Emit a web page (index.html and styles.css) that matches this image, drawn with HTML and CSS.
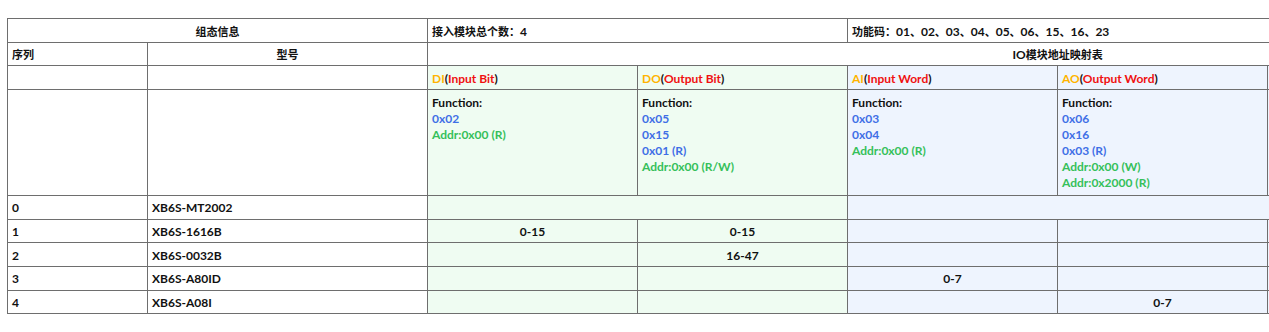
FILE: index.html
```html
<!DOCTYPE html>
<html lang="zh">
<head>
<meta charset="utf-8">
<title>IO模块地址映射表</title>
<link rel="stylesheet" href="styles.css">
</head>
<body>
<div class="wrap">
<table class="map">
  <colgroup>
    <col class="c-seq"><col class="c-model">
    <col class="c-io"><col class="c-io"><col class="c-io"><col class="c-io"><col class="c-io"><col class="c-io">
  </colgroup>
  <tbody>
    <tr class="row">
      <td colspan="2" class="center"><span class="zh">组态信息</span></td>
      <td colspan="2"><span class="zh">接入模块总个数：</span>4</td>
      <td colspan="4"><span class="zh">功能码：</span>01<span class="zh">、</span>02<span class="zh">、</span>03<span class="zh">、</span>04<span class="zh">、</span>05<span class="zh">、</span>06<span class="zh">、</span>15<span class="zh">、</span>16<span class="zh">、</span>23</td>
    </tr>
    <tr class="row">
      <td><span class="zh">序列</span></td>
      <td class="center"><span class="zh">型号</span></td>
      <td colspan="6" class="center">IO<span class="zh">模块地址映射表</span></td>
    </tr>
    <tr class="row">
      <td></td>
      <td></td>
      <td class="g"><span class="o">DI</span>(<span class="r">Input Bit</span>)</td>
      <td class="g"><span class="o">DO</span>(<span class="r">Output Bit</span>)</td>
      <td class="b"><span class="o">AI</span>(<span class="r">Input Word</span>)</td>
      <td class="b"><span class="o">AO</span>(<span class="r">Output Word</span>)</td>
      <td class="b"></td>
      <td class="b"></td>
    </tr>
    <tr class="fn">
      <td></td>
      <td></td>
      <td class="g"><div>Function:</div><div class="bl">0x02</div><div class="gr">Addr:0x00 (R)</div></td>
      <td class="g"><div>Function:</div><div class="bl">0x05</div><div class="bl">0x15</div><div class="bl">0x01 (R)</div><div class="gr">Addr:0x00 (R/W)</div></td>
      <td class="b"><div>Function:</div><div class="bl">0x03</div><div class="bl">0x04</div><div class="gr">Addr:0x00 (R)</div></td>
      <td class="b"><div>Function:</div><div class="bl">0x06</div><div class="bl">0x16</div><div class="bl">0x03 (R)</div><div class="gr">Addr:0x00 (W)</div><div class="gr">Addr:0x2000 (R)</div></td>
      <td class="b"></td>
      <td class="b"></td>
    </tr>
    <tr class="row">
      <td>0</td><td>XB6S-MT2002</td>
      <td colspan="2" class="g"></td>
      <td colspan="4" class="b"></td>
    </tr>
    <tr class="row">
      <td>1</td><td>XB6S-1616B</td>
      <td class="g center">0-15</td><td class="g center">0-15</td>
      <td class="b"></td><td class="b"></td><td class="b"></td><td class="b"></td>
    </tr>
    <tr class="row">
      <td>2</td><td>XB6S-0032B</td>
      <td class="g"></td><td class="g center">16-47</td>
      <td class="b"></td><td class="b"></td><td class="b"></td><td class="b"></td>
    </tr>
    <tr class="row">
      <td>3</td><td>XB6S-A80ID</td>
      <td class="g"></td><td class="g"></td>
      <td class="b center">0-7</td><td class="b"></td><td class="b"></td><td class="b"></td>
    </tr>
    <tr class="row">
      <td>4</td><td>XB6S-A08I</td>
      <td class="g"></td><td class="g"></td>
      <td class="b"></td><td class="b center">0-7</td><td class="b"></td><td class="b"></td>
    </tr>
  </tbody>
</table>
</div>
</body>
</html>
```
FILE: styles.css
```css
html, body {
  margin: 0;
  padding: 0;
  background: #ffffff;
}
.wrap {
  width: 1269px;
  height: 332px;
  overflow: hidden;
  box-sizing: border-box;
  padding: 18px 0 0 7px;
}
.map {
  border-collapse: collapse;
  table-layout: fixed;
  width: 1680px;
  font-family: "Lato", "Noto Sans CJK SC", sans-serif;
  font-weight: 700;
  font-size: 12px;
  color: #111111;
}
.c-seq { width: 140px; }
.c-model { width: 280px; }
.c-io { width: 210px; }
.map td {
  border: 1px solid #6e6e6e;
  padding: 0 4px;
  white-space: nowrap;
  vertical-align: middle;
  overflow: hidden;
}
.row td {
  height: 20.67px;
  padding-top: 2px;
  padding-bottom: 0;
  line-height: 16px;
}
.fn td {
  height: 96px;
  padding-top: 5px;
  padding-bottom: 4px;
  vertical-align: top;
  line-height: 16px;
}
.zh {
  font-family: "Noto Sans CJK SC", sans-serif;
  font-size: 11px;
}
.center { text-align: center; }
.g { background: #effcf2; }
.b { background: #eef4fe; }
.o { color: #ffb400; }
.r { color: #f01010; }
.bl { color: #3f6fe6; }
.gr { color: #35c05a; }
```
